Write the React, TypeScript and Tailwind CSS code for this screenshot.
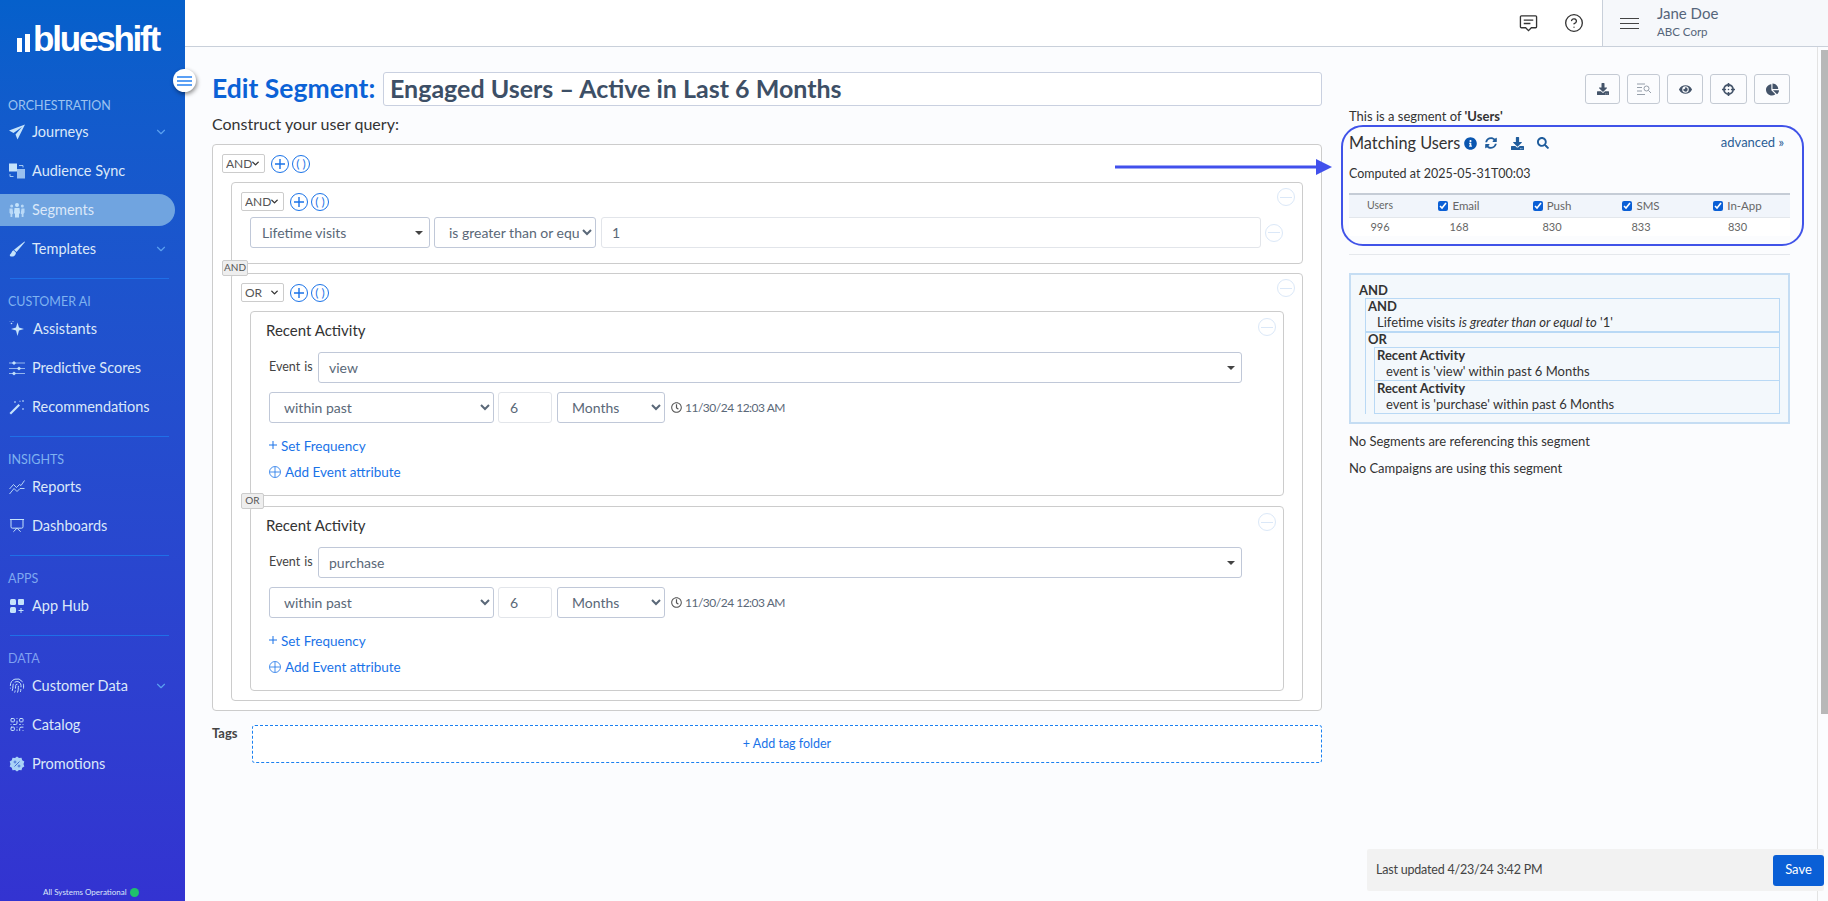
import { ChevronDown, CircleHelp, Fingerprint, Presentation, QrCode } from "lucide-react";
import type { ReactNode } from "react";
import { FaChartPie, FaCrosshairs, FaDownload, FaEye, FaInfoCircle, FaRegClock, FaSearch, FaSyncAlt } from "react-icons/fa";

const PlaneIcon = () => (
  <svg viewBox="0 0 16 16" className="w-4 h-4" fill="currentColor">
    <path d="M16 0.500 0 6.500l4.500 2.500L13 3 6.500 10.500l2 5z" />
  </svg>
);

const AudienceIcon = () => (
  <svg viewBox="0 0 16 16" className="w-4 h-4" fill="currentColor">
    <rect x="0" y="0.500" width="8" height="8" />
    <rect x="8" y="6" width="8" height="9.500" opacity="0.75" />
    <path d="M10 2.500h4v2M1 11v2.500h3.500" fill="none" stroke="currentColor" strokeWidth="0.800" />
  </svg>
);

const PeopleIcon = () => (
  <svg viewBox="0 0 16 16" className="w-4 h-4" fill="currentColor">
    <circle cx="8" cy="3" r="2" />
    <circle cx="2.700" cy="4" r="1.500" opacity="0.85" />
    <circle cx="13.300" cy="4" r="1.500" opacity="0.85" />
    <path d="M5.500 6h5l.5 5-1 1v3.500H6V12l-1-1z" />
    <path d="M0.500 6.500h3l.8 5-1 .7v2.800H1.500v-3L.5 11zM15.500 6.500h-3l-.8 5 1 .7v2.800h1.800v-3l1-1.500z" opacity="0.85" />
  </svg>
);

const BrushIcon = () => (
  <svg viewBox="0 0 16 16" className="w-4 h-4" fill="currentColor">
    <path d="M15.500 0.500 16 1 7.500 11 5 8.700z" />
    <path d="M4.500 9.200C2.500 9.700 3 12 1.500 13c-.8.500-1 1.500-.2 2.200.900.700 3 .500 4.200-.5 1.300-1.100 1.500-2.500 1.400-3.200z" />
  </svg>
);

const SparkleIcon = () => (
  <svg viewBox="0 0 16 16" className="w-[17px] h-[17px]" fill="currentColor">
    <path d="M8.500 2 10 7l5 1.500L10 10l-1.500 5.500L7 10 2 8.500 7 7z" />
    <circle cx="2.500" cy="3" r="0.800" />
    <circle cx="4" cy="1" r="0.500" />
    <circle cx="1" cy="0.800" r="0.400" />
  </svg>
);

const SlidersIcon = () => (
  <svg viewBox="0 0 16 16" className="w-4 h-4" fill="currentColor" stroke="currentColor" strokeWidth="0.700">
    <path d="M0 3h16M0 8.500h16M0 13.500h16" fill="none" />
    <circle cx="5" cy="3" r="1.300" />
    <circle cx="10" cy="8.500" r="1.300" />
    <circle cx="5" cy="13.500" r="1.300" />
  </svg>
);

const WandIcon = () => (
  <svg viewBox="0 0 16 16" className="w-4 h-4" fill="currentColor">
    <path d="M9.500 5 11 6.500 2 15.500.5 14z" />
    <path d="M6 2l1 1-1 1-1-1zM14 1l1 1-1 1-1-1zM14 9l1 1-1 1-1-1zM11 1.500l.7.700-.7.700-.7-.700z" />
  </svg>
);

const ReportsIcon = () => (
  <svg viewBox="0 0 16 16" className="w-4 h-4" fill="none" stroke="currentColor" strokeWidth="0.900">
    <path d="M0.500 10 4.500 5.500l3 3 3-3 1.500 1 3.500-5M0.500 15 5 9.500l3 3 3-3 4.500 0" />
  </svg>
);

const AppHubIcon = () => (
  <svg viewBox="0 0 16 16" className="w-4 h-4" fill="currentColor">
    <rect x="1" y="1" width="6" height="6" rx="1.500" />
    <rect x="9" y="1" width="6" height="6" rx="1" />
    <rect x="1" y="9" width="6" height="6" rx="1.500" />
    <path d="M12 10v5M9.500 12.500h5" stroke="currentColor" strokeWidth="1" />
  </svg>
);

const PromoIcon = () => (
  <svg viewBox="0 0 16 16" className="w-4 h-4">
    <path d="M8 0.500l2 1.500 2.500-.2.700 2.400 2.100 1.400L14.500 8l.8 2.400-2.100 1.400-.7 2.400-2.500-.2-2 1.500-2-1.500-2.500.2-.7-2.400L.7 10.400 1.500 8 .7 5.600l2.100-1.400.7-2.400 2.500.2z" fill="#a9d3f7" />
    <path d="M5.500 10.500l5-5" stroke="#2b55c9" strokeWidth="0.800" />
    <circle cx="6" cy="6" r="1" fill="none" stroke="#2b55c9" strokeWidth="0.700" />
    <circle cx="10" cy="10" r="1" fill="none" stroke="#2b55c9" strokeWidth="0.700" />
  </svg>
);

const FeedbackIcon = () => (
  <svg viewBox="0 0 20 20" className="w-[19px] h-[19px] mr-[26px] text-[#333]" fill="none" stroke="currentColor" strokeWidth="1.400">
    <path d="M2.500 2h15a1 1 0 0 1 1 1v10.500a1 1 0 0 1-1 1H13l-3 3-3-3H2.500a1 1 0 0 1-1-1V3a1 1 0 0 1 1-1z" />
    <path d="M5 6.500h10M5 10h7" />
  </svg>
);

const navSections = [
  {
    label: "ORCHESTRATION",
    labelColor: "text-[#9cc3f0]",
    items: [
      { name: "Journeys", icon: <PlaneIcon />, chevron: true },
      { name: "Audience Sync", icon: <AudienceIcon /> },
      { name: "Segments", icon: <PeopleIcon />, active: true },
      { name: "Templates", icon: <BrushIcon />, chevron: true },
    ],
  },
  {
    label: "CUSTOMER AI",
    labelColor: "text-[#7fb2f0]",
    items: [
      { name: "Assistants", icon: <SparkleIcon />, gap: true },
      { name: "Predictive Scores", icon: <SlidersIcon /> },
      { name: "Recommendations", icon: <WandIcon /> },
    ],
  },
  {
    label: "INSIGHTS",
    labelColor: "text-[#7fb2f0]",
    items: [
      { name: "Reports", icon: <ReportsIcon /> },
      { name: "Dashboards", icon: <Presentation size={17} strokeWidth={1.5} /> },
    ],
  },
  {
    label: "APPS",
    labelColor: "text-[#7fa8f0]",
    items: [{ name: "App Hub", icon: <AppHubIcon /> }],
  },
  {
    label: "DATA",
    labelColor: "text-[#7fa0f0]",
    items: [
      { name: "Customer Data", icon: <Fingerprint size={17} strokeWidth={1.5} />, chevron: true },
      { name: "Catalog", icon: <QrCode size={17} strokeWidth={1.5} /> },
      { name: "Promotions", icon: <PromoIcon /> },
    ],
  },
];

function Sidebar() {
  return (
    <aside className="relative z-10 w-[185px] shrink-0 h-full bg-gradient-to-b from-[#0560cb] to-[#3333d1] text-[#dbe8f9]">
      <div className="flex items-end h-[26px] mt-[27px] ml-[17px] text-white">
        <span className="w-[5px] h-[14px] bg-white mb-[1px]" />
        <span className="w-[5px] h-[18px] bg-white ml-[3px] mb-[1px]" />
        <span className="font-['Liberation_Sans'] font-bold text-[35px] leading-[26px] tracking-[-2.2px] ml-[3px] pb-[1px]">blueshift</span>
      </div>
      <div className="mt-[46px]">
        {navSections.map((section, i) => (
          <div key={section.label}>
            {i > 0 && <div className="h-px bg-[#1f6fe8] ml-[10px] w-[159px] mt-[10px] mb-[16px]" />}
            <div className={`h-[14px] leading-[14px] text-[12.500px] ml-[8px] ${section.labelColor} ${i === 0 ? "-mb-px" : ""}`}>{section.label}</div>
            {section.items.map((item) => (
              <div key={item.name} className="h-[39px] flex items-center">
                <div className={`flex items-center w-[175px] h-[32px] pl-[9px] rounded-r-full ${item.active ? "bg-[#70a4e0]" : ""}`}>
                  <span className="w-4 flex justify-center text-[#c5e3fb]">{item.icon}</span>
                  <span className={`text-[14.500px] ${item.gap ? "ml-[8px]" : "ml-[7px]"}`}>{item.name}</span>
                  {item.chevron && <ChevronDown size={14} className="ml-auto mr-[7px] text-[#5aa0f0]" />}
                </div>
              </div>
            ))}
          </div>
        ))}
      </div>
      <div className="absolute bottom-[3px] left-[43px] flex items-center text-[8px] leading-3">
        All Systems Operational
        <span className="w-[9px] h-[9px] rounded-full bg-[#1fc16b] ml-[3px]" />
      </div>
      <button className="absolute left-[173px] top-[69px] w-[23px] h-[23px] rounded-full bg-white shadow-[1px_2px_4px_rgba(0,0,0,0.45)] flex flex-col items-center justify-center gap-[2px]">
        <span className="w-[15px] h-[2px] bg-[#5ba0f5]" />
        <span className="w-[15px] h-[2px] bg-[#5ba0f5]" />
        <span className="w-[15px] h-[2px] bg-[#5ba0f5]" />
      </button>
    </aside>
  );
}

function Header() {
  return (
    <header className="h-[47px] shrink-0 bg-white border-b border-[#c9d0da] flex items-center justify-end">
      <FeedbackIcon />
      <CircleHelp size={20} strokeWidth={1.6} className="text-[#333] mr-[18px]" />
      <div className="w-[226px] h-full bg-[#f6f8fb] border-l border-[#c9d0da] flex items-center pl-[17px]">
        <div className="w-[19px] flex flex-col gap-[4px]">
          <span className="h-px bg-[#444]" />
          <span className="h-px bg-[#444]" />
          <span className="h-px bg-[#444]" />
        </div>
        <div className="ml-[18px] -mt-[3px] text-[#55657a]">
          <div className="text-[15px] leading-[18px]">Jane Doe</div>
          <div className="text-[11.500px] leading-[16px] mt-[2px]">ABC Corp</div>
        </div>
      </div>
    </header>
  );
}

const Caret = () => <span className="w-0 h-0 border-x-[4px] border-x-transparent border-t-[4px] border-t-[#444] ml-auto" />;

function ConjSelect({ value }: { value: string }) {
  return (
    <span className="relative block w-[43px] h-[19px]">
      <select defaultValue={value} className="block appearance-none w-full h-full border border-[#ccc] rounded-[2px] bg-white text-[12px] text-[#555] pl-[3px]">
        <option>{value}</option>
      </select>
      <ChevronDown size={11} strokeWidth={3} className="absolute right-[4px] top-[4px] text-[#333] pointer-events-none" />
    </span>
  );
}

function CircleBtn({ children }: { children: ReactNode }) {
  return (
    <span className="w-[18px] h-[18px] rounded-full border border-[#1a73e8] text-[#1a73e8] flex items-center justify-center text-[12px] leading-none">
      {children}
    </span>
  );
}

function QueryControls({ value }: { value: string }) {
  return (
    <div className="flex items-center">
      <ConjSelect value={value} />
      <span className="ml-[6px] flex gap-[3px]">
        <CircleBtn>
          <svg viewBox="0 0 10 10" className="w-[10px] h-[10px]" stroke="currentColor" strokeWidth="1.400">
            <path d="M5 0v10M0 5h10" />
          </svg>
        </CircleBtn>
        <CircleBtn>( )</CircleBtn>
      </span>
    </div>
  );
}

const MinusBtn = ({ className = "" }: { className?: string }) => (
  <span className={`w-[18px] h-[18px] rounded-full border border-[#dbe8f8] flex items-center justify-center ${className}`}>
    <span className="w-[12px] h-px bg-[#dbe8f8]" />
  </span>
);

const Chip = ({ label, className }: { label: string; className: string }) => (
  <span className={`absolute top-[-14px] left-[-10px] h-[16px] bg-[#eee] border border-[#ccc] rounded-[2px] text-[10px] leading-[13px] text-center text-[#555] ${className}`}>
    {label}
  </span>
);

function NativeSelect({ value, width }: { value: string; width: string }) {
  return (
    <select defaultValue={value} className={`${width} h-[31px] border border-[#c0c8d8] rounded-[3px] bg-white text-[14px] text-[#5a6878] pl-[10px]`}>
      <option>{value}</option>
    </select>
  );
}

function RecentActivity({ event, children }: { event: string; children?: ReactNode }) {
  return (
    <div className="relative h-[185px] border border-[#ccc] rounded-[4px] pt-[7px] pl-[18px] pr-[41px]">
      {children}
      <MinusBtn className="absolute top-[6px] right-[7px]" />
      <div className="-ml-[3px] h-[22px] leading-[22px] text-[15px] text-[#333]">Recent Activity</div>
      <div className="flex items-center mt-[11px]">
        <span className="w-[49px] text-[12.500px] text-[#444] [word-spacing:1px] whitespace-nowrap">Event is</span>
        <div className="flex-1 h-[31px] border border-[#c0c8d8] rounded-[3px] flex items-center pl-[10px] pr-[6px] text-[14px] text-[#5a6878]">
          {event}
          <Caret />
        </div>
      </div>
      <div className="flex items-center mt-[9px]">
        <NativeSelect value="within past" width="w-[225px]" />
        <input defaultValue="6" className="w-[54px] h-[31px] ml-[4px] border border-[#e2e5ea] rounded-[3px] pl-[11px] text-[14px] text-[#5a6878]" />
        <span className="ml-[5px]"><NativeSelect value="Months" width="w-[108px]" /></span>
        <FaRegClock size={11} className="ml-[6px] text-[#555]" />
        <span className="ml-[3px] text-[12px] tracking-[-0.500px] text-[#5a6878]">11/30/24 12:03 AM</span>
      </div>
      <div className="flex items-center h-[20px] mt-[13px] text-[13.500px] text-[#1a73e8]">
        <svg viewBox="0 0 8 8" className="w-[8px] h-[8px] mr-[4px] -mt-[2px]" stroke="currentColor" strokeWidth="1">
          <path d="M4 0v8M0 4h8" />
        </svg>
        Set Frequency
      </div>
      <div className="flex items-center h-[20px] mt-[6px] text-[13.500px] text-[#1a73e8]">
        <svg viewBox="0 0 12 12" className="w-[12px] h-[12px] mr-[4px]" fill="none" stroke="currentColor" strokeWidth="0.800">
          <circle cx="6" cy="6" r="5.500" />
          <path d="M6 1v10M1 6h10" />
        </svg>
        Add Event attribute
      </div>
    </div>
  );
}

function QueryBuilder() {
  return (
    <div className="mt-[9px] bg-white border border-[#ccc] rounded-[4px] pt-[9px] pb-[9px] pl-[9px] pr-[18px]">
      <QueryControls value="AND" />
      <div className="relative ml-[9px] mt-[9px] h-[82px] border border-[#ccc] rounded-[4px] pt-[9px] pl-[9px]">
        <MinusBtn className="absolute top-[5px] right-[7px]" />
        <QueryControls value="AND" />
        <div className="flex items-center mt-[6px] ml-[9px]">
          <div className="w-[180px] h-[31px] border border-[#c0c8d8] rounded-[3px] flex items-center pl-[11px] pr-[6px] text-[14px] text-[#5a6878]">
            Lifetime visits
            <Caret />
          </div>
          <select defaultValue="gte" className="w-[162px] ml-[4px] h-[31px] border border-[#c0c8d8] rounded-[3px] bg-white text-[14px] text-[#5a6878] pl-[10px]">
            <option value="gte">is greater than or equal to</option>
          </select>
          <input defaultValue="1" className="w-[660px] ml-[5px] h-[31px] border border-[#e2e5ea] rounded-[3px] pl-[10px] text-[14px] text-[#5a6878]" />
          <MinusBtn className="ml-[4px]" />
        </div>
      </div>
      <div className="relative ml-[9px] mt-[9px] border border-[#ccc] rounded-[4px] pt-[9px] pb-[9px] pl-[9px] pr-[18px]">
        <Chip label="AND" className="w-[26px]" />
        <MinusBtn className="absolute top-[5px] right-[7px]" />
        <QueryControls value="OR" />
        <div className="ml-[9px] mt-[9px]">
          <RecentActivity event="view" />
        </div>
        <div className="ml-[9px] mt-[10px]">
          <RecentActivity event="purchase">
            <Chip label="OR" className="w-[23px]" />
          </RecentActivity>
        </div>
      </div>
    </div>
  );
}

const toolButtons = [
  { w: "w-[35px]", icon: <FaDownload size={12} className="text-[#44546a]" /> },
  {
    w: "w-[33px]",
    icon: (
      <svg viewBox="0 0 14 12" className="w-[14px] h-[12px]" fill="none" stroke="#7c8794" strokeWidth="0.800">
        <path d="M0 1h8M0 4.500h5M0 8h5M0 11.500h8" />
        <circle cx="9.500" cy="5.500" r="2.500" />
        <path d="M11.500 7.500 14 10" />
      </svg>
    ),
  },
  { w: "w-[36px]", icon: <FaEye size={13} className="text-[#44546a]" /> },
  { w: "w-[37px]", icon: <FaCrosshairs size={13} className="text-[#44546a]" /> },
  { w: "w-[36px]", icon: <FaChartPie size={13} className="text-[#44546a]" /> },
];

const channels = [
  { name: "Email", count: 168 },
  { name: "Push", count: 830 },
  { name: "SMS", count: 833 },
  { name: "In-App", count: 830 },
];

function MatchingUsers() {
  return (
    <div className="relative -ml-[8px] -mr-[14px] h-[121px] border-2 border-[#4053e8] rounded-[22px] pt-[5px] pl-[6px] pr-[12px]">
      <div className="flex items-center h-[22px]">
        <span className="text-[16.300px] text-[#333]">Matching Users</span>
        <FaInfoCircle size={13} className="ml-[4px] text-[#0a56b0]" />
        <FaSyncAlt size={12} className="ml-[8px] text-[#1f5c9c]" />
        <FaDownload size={13} className="ml-[14px] text-[#1f5c9c]" />
        <FaSearch size={12} className="ml-[13px] text-[#1f5c9c]" />
        <span className="ml-auto mr-[6px] text-[13px] text-[#2b5e96]">advanced »</span>
      </div>
      <div className="mt-[11px] h-[18px] leading-[18px] text-[12.500px] text-[#333]">Computed at 2025-05-31T00:03</div>
      <div className="mt-[10px] text-[11.500px] text-[#666]">
        <div className="grid grid-cols-[62px_96px_90px_88px_105px] h-[25px] items-center bg-[#f1f5fb] border-t-2 border-b border-t-[#c5ccd6] border-b-[#e3e7ec]">
          <span className="text-center text-[10.500px]">Users</span>
          {channels.map((c) => (
            <label key={c.name} className="flex items-center justify-center gap-[4px]">
              <input type="checkbox" defaultChecked className="w-[10px] h-[10px] m-0 accent-[#0a5fd6]" />
              {c.name}
            </label>
          ))}
        </div>
        <div className="grid grid-cols-[62px_96px_90px_88px_105px] h-[18px] items-center bg-white text-center text-[11px]">
          <span>996</span>
          {channels.map((c) => (
            <span key={c.name}>{c.count}</span>
          ))}
        </div>
      </div>
    </div>
  );
}

function QuerySummary() {
  return (
    <div className="mt-[18px] h-[151px] border-2 border-[#c5ddf3] bg-[#f3f8fc] pt-[7px] text-[13px] leading-[16px] text-[#333]">
      <div className="ml-[8px] font-bold">AND</div>
      <div className="ml-[14px] mr-[8px] h-[34px] border border-[#b9d9f5] pl-[2px]">
        <div className="font-bold -mt-px">AND</div>
        <div className="pl-[9px]">
          Lifetime visits <i>is greater than or equal to</i> '1'
        </div>
      </div>
      <div className="ml-[14px] mr-[8px] border border-b-0 border-[#b9d9f5]">
        <div className="pl-[2px] h-[14px] leading-[14px] font-bold -mt-px mb-px">OR</div>
        {["view", "purchase"].map((e, i) => (
          <div key={e} className={`ml-[8px] h-[34px] border-l border-y border-[#b9d9f5] pl-[2px] ${i > 0 ? "-mt-px" : ""}`}>
            <div className="font-bold -mt-px">Recent Activity</div>
            <div className="pl-[9px]">event is '{e}' within past 6 Months</div>
          </div>
        ))}
      </div>
    </div>
  );
}

function RightColumn() {
  return (
    <div className="w-[441px] ml-[27px] pt-[27px]">
      <div className="flex justify-end gap-[7px]">
        {toolButtons.map((b, i) => (
          <button key={i} className={`${b.w} h-[30px] border border-[#c4cad3] rounded-[3px] flex items-center justify-center`}>
            {b.icon}
          </button>
        ))}
      </div>
      <div className="mt-[3px] h-[18px] leading-[18px] text-[13px] text-[#333]">
        This is a segment of <b>'Users'</b>
      </div>
      <MatchingUsers />
      <div className="mt-[8px] h-px bg-[#e5e8ec]" />
      <QuerySummary />
      <div className="mt-[8px] h-[18px] leading-[18px] text-[13px] text-[#333]">No Segments are referencing this segment</div>
      <div className="mt-[9px] h-[18px] leading-[18px] text-[13px] text-[#333]">No Campaigns are using this segment</div>
    </div>
  );
}

export default function App() {
  return (
    <div className="flex w-full h-screen overflow-hidden font-[Lato,sans-serif] text-[#333]">
      <Sidebar />
      <div className="flex-1 flex flex-col min-w-0">
        <Header />
        <main className="relative flex-1 flex bg-[#fbfcfe]">
          <div className="w-[1110px] ml-[27px] pt-[25px] shrink-0">
            <div className="flex items-center h-[34px]">
              <h1 className="w-[171px] shrink-0 text-[26.500px] font-bold text-[#0b62d6] whitespace-nowrap">Edit Segment:</h1>
              <div className="flex-1 h-full bg-white border border-[#c9d0e0] rounded-[3px] pl-[6px] flex items-center text-[25px] font-bold text-[#3d4f66]">
                Engaged Users – Active in Last 6 Months
              </div>
            </div>
            <div className="mt-[7px] h-[22px] leading-[22px] text-[16px] text-[#333]">Construct your user query:</div>
            <QueryBuilder />
            <div className="flex mt-[14px]">
              <span className="w-[40px] -mt-px text-[13px] font-bold text-[#444]">Tags</span>
              <div className="flex-1 h-[38px] bg-white border border-dashed border-[#1a80f0] rounded-[3px] flex items-center justify-center text-[12.500px] text-[#1a73e8]">
                + Add tag folder
              </div>
            </div>
          </div>
          <RightColumn />

          {/* arrow pointing at the counts */}
          <svg className="absolute left-[930px] top-[112px] w-[220px] h-[16px]" viewBox="0 0 220 16">
            <path d="M0 6.500h205v3H0z M201 0l16 8-16 8z" fill="#4150ec" />
          </svg>

          {/* page scrollbar */}
          <div className="absolute top-0 bottom-0 right-0 w-[11px] border-l border-[#e3e3e3]">
            <div className="absolute top-[3px] right-0 w-[7px] h-[664px] bg-[#b8b8b8]" />
          </div>

          <div className="absolute left-[1182px] top-[802px] w-[457px] h-[42px] bg-[#f2f2f2] rounded-[2px] flex items-center pl-[9px] text-[12.500px] tracking-[-0.200px] text-[#444]">
            Last updated 4/23/24 3:42 PM
            <button className="ml-auto h-[31px] w-[51px] bg-[#0a5fd6] rounded-[3px] text-white text-[13px] tracking-normal">Save</button>
          </div>
        </main>
      </div>
    </div>
  );
}
